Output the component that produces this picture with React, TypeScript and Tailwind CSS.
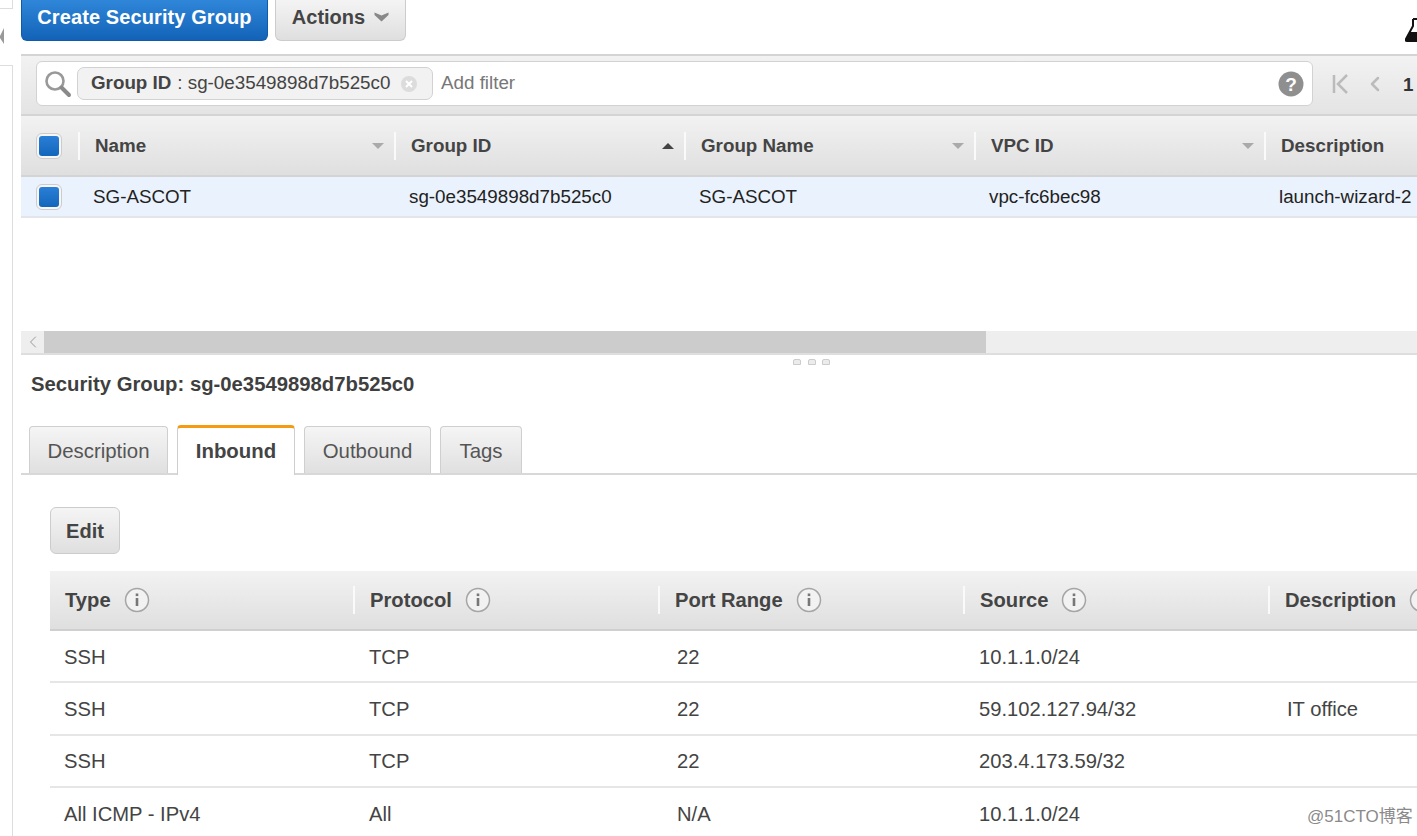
import { ChevronLeft } from "lucide-react"

const font = { fontFamily: '"Liberation Sans", Arial, sans-serif' }

const groupCols = [
  { label: "Name", value: "SG-ASCOT", width: "w-[316px]" },
  { label: "Group ID", value: "sg-0e3549898d7b525c0", width: "w-[290px]", sorted: true },
  { label: "Group Name", value: "SG-ASCOT", width: "w-[290px]" },
  { label: "VPC ID", value: "vpc-fc6bec98", width: "w-[290px]" },
  { label: "Description", value: "launch-wizard-2", width: "w-[200px]", last: true },
]

const ruleCols = ["Type", "Protocol", "Port Range", "Source", "Description"]

// cell text doesn't sit on one offset in the reference
const cellPad = ["pl-[14px]", "pl-[14px]", "pl-[17px]", "pl-[14px]", "pl-[17px]"]

const rules = [
  ["SSH", "TCP", "22", "10.1.1.0/24", ""],
  ["SSH", "TCP", "22", "59.102.127.94/32", "IT office"],
  ["SSH", "TCP", "22", "203.4.173.59/32", ""],
  ["All ICMP - IPv4", "All", "N/A", "10.1.1.0/24", ""],
]

function Check() {
  return (
    <div className="w-[26px] h-[26px] rounded-[6px] border border-[#ccc] bg-[#f6f6f6] flex items-center justify-center">
      <div className="w-[20px] h-[20px] rounded-[3px] bg-gradient-to-b from-[#2a7fd6] to-[#1166bb]" />
    </div>
  )
}

function InfoIcon() {
  return (
    <svg width="26" height="26" viewBox="0 0 26 26" className="shrink-0">
      <circle cx="13" cy="13" r="11.5" fill="#f2f2f2" stroke="#a5a5a5" strokeWidth="1.5" />
      <rect x="11.7" y="11" width="2.6" height="8" fill="#777" />
      <rect x="11.7" y="6.5" width="2.6" height="2.6" fill="#777" />
    </svg>
  )
}

function Caret({ up }: { up?: boolean }) {
  return (
    <svg width="12" height="6" viewBox="0 0 12 6">
      <path d={up ? "M0 6 L6 0 L12 6 Z" : "M0 0 L12 0 L6 6 Z"} fill={up ? "#444" : "#aaa"} />
    </svg>
  )
}

export default function App() {
  return (
    <div className="w-[1417px] h-[836px] overflow-hidden bg-white flex text-[18.8px] text-[#444]" style={font}>
      {/* left rail sliver */}
      <div className="w-[21px] shrink-0 flex flex-col">
        <div className="w-[13px] h-[9px] border-r border-b border-[#ddd]" />
        <div className="h-[56px] flex items-center">
          <svg width="4" height="22" viewBox="0 0 4 22" className="-mt-[2px]">
            <path d="M0 11 L4 3 L4 19 L0 13 Z" fill="#999" />
          </svg>
        </div>
        <div className="w-[13px] flex-1 border-r border-t border-[#ddd]" />
      </div>

      <div className="flex-1 min-w-0 overflow-hidden">
        {/* toolbar */}
        <div className="h-[54px] relative flex items-start gap-[7px]">
          <button className="w-[247px] h-[41px] rounded-b-[6px] border border-[#0f5ba8] border-t-0 bg-gradient-to-b from-[#2f86d8] to-[#1263b8] text-white font-bold text-[20px] leading-[34px] tracking-[0.1px] pb-[6px]">
            Create Security Group
          </button>
          <button className="w-[131px] h-[41px] rounded-b-[6px] border border-[#ccc] border-t-0 bg-gradient-to-b from-[#f4f4f4] to-[#dfdfdf] font-bold text-[20px] flex items-start justify-center gap-[9px] leading-[34px]">
            Actions
            <svg width="15" height="10" viewBox="0 0 15 10" className="mt-[12px]">
              <path d="M0.5 0.5 L7.5 3.5 L14.5 0.5 L14.5 3 L7.5 9.5 L0.5 3 Z" fill="#888" />
            </svg>
          </button>
          <svg width="14" height="24" viewBox="0 0 14 24" className="absolute left-[1384px] top-[18px]">
            <path d="M8 1 H14 M8 1 V8 L1 21 Q0 23 2 23 H14" fill="none" stroke="#111" strokeWidth="2" />
            <path d="M5 14 H14 V23 H2 Q0 23 1 21 Z" fill="#111" />
          </svg>
        </div>

        {/* filter bar */}
        <div className="h-[62px] border-t-2 border-b-2 border-[#d4d4d4] bg-gradient-to-b from-[#f2f2f2] to-[#e4e4e4] flex items-start pt-[5px] pl-[15px]">
          <div className="w-[1277px] h-[45px] shrink-0 rounded-[6px] border border-[#d2d2d2] bg-white flex items-center">
            <svg width="28" height="28" viewBox="0 0 28 28" className="ml-[7px] shrink-0">
              <circle cx="11" cy="11" r="8.5" fill="none" stroke="#999" strokeWidth="2.6" />
              <path d="M17.5 17.5 L25 25" stroke="#8a8a8a" strokeWidth="4" strokeLinecap="round" />
            </svg>
            <div className="ml-[5px] w-[356px] h-[33px] rounded-[7px] border border-[#d2d2d2] bg-[#f2f2f2] flex items-center pl-[13px] whitespace-nowrap">
              <span className="font-bold">Group ID</span>
              <span className="ml-[6px]">: sg-0e3549898d7b525c0</span>
              <svg width="18" height="18" viewBox="0 0 18 18" className="ml-[10px]">
                <circle cx="9" cy="9" r="8" fill="#dcdcdc" />
                <path d="M6 6 L12 12 M12 6 L6 12" stroke="#fff" strokeWidth="2" />
              </svg>
            </div>
            <span className="ml-[8px] text-[#777]">Add filter</span>
            <svg width="26" height="26" viewBox="0 0 26 26" className="ml-auto mr-[8px]">
              <circle cx="13" cy="13" r="12.5" fill="#8f8f8f" />
              <text x="13" y="19.5" textAnchor="middle" fontSize="19" fontWeight="700" fill="#fff" style={font}>?</text>
            </svg>
          </div>
          <svg width="17" height="20" viewBox="0 0 17 20" className="ml-[19px] mt-[13px] shrink-0">
            <path d="M2 1 V19 M15 1 L6 10 L15 19" fill="none" stroke="#bbb" strokeWidth="2.5" />
          </svg>
          <ChevronLeft className="ml-[14px] mt-[11px] shrink-0 text-[#bbb]" size={24} strokeWidth={2.5} />
          <span className="ml-[16px] mt-[10px] font-bold text-[#333]">1</span>
        </div>

        {/* groups table */}
        <div className="h-[61px] border-b-2 border-[#d4d4d4] bg-gradient-to-b from-[#f2f2f2] to-[#dfdfdf] flex items-center pl-[1px] pt-[1px]">
          <div className="w-[58px] shrink-0 h-[28px] flex items-center pl-[14px] border-r-2 border-[#fafafa]">
            <Check />
          </div>
          {groupCols.map((col) => (
            <div
              key={col.label}
              className={`${col.width} shrink-0 h-[28px] flex items-center pl-[15px] pr-[10px] justify-between font-bold ${col.last ? "" : "border-r-2 border-[#fafafa]"}`}
            >
              <span>{col.label}</span>
              {!col.last && <Caret up={col.sorted} />}
            </div>
          ))}
        </div>
        <div className="h-[41px] pt-[1px] border-b-2 border-[#e2e6ea] bg-[#eaf2fd] flex items-center text-[#222]">
          <div className="w-[58px] shrink-0 pl-[15px] -mt-[1px]">
            <Check />
          </div>
          {groupCols.map((col) => (
            <div key={col.label} className={`${col.width} shrink-0 pl-[14px] whitespace-nowrap`}>
              {col.value}
            </div>
          ))}
        </div>

        <div className="h-[113px]" />

        {/* horizontal scrollbar */}
        <div className="h-[24px] border-b-2 border-[#dedede] bg-[#eeeeee] flex">
          <div className="w-[23px] shrink-0 flex items-center justify-center">
            <ChevronLeft size={20} strokeWidth={1.2} className="text-[#999]" />
          </div>
          <div className="w-[942px] shrink-0 bg-[#cccccc]" />
        </div>

        {/* drag handle */}
        <div className="h-[13px] flex items-center gap-[6.5px] pl-[772px]">
          {[0, 1, 2].map((i) => (
            <div key={i} className="w-[8px] h-[6px] rounded-t-[2px] bg-[#ececec] border border-[#ccc]" />
          ))}
        </div>

        {/* detail panel */}
        <div className="pl-[10px] pt-[2px] h-[31px] flex items-center font-bold text-[20.3px] text-[#3f3f3f]">
          Security Group: sg-0e3549898d7b525c0
        </div>

        <div className="mt-[25px] h-[51px] pl-[8px] flex items-end gap-[9px] border-b-2 border-[#d8d8d8] text-[20.4px]">
          <div className="w-[139px] h-[47px] pt-[2px] rounded-t-[4px] border border-b-0 border-[#cfcfcf] bg-gradient-to-b from-[#f5f5f5] to-[#e0e0e0] flex items-center justify-center text-[#555]">
            Description
          </div>
          <div className="w-[118px] h-[50px] -mb-[2px] rounded-t-[4px] border-x border-[#cfcfcf] border-t-[3px] border-t-[#f39c12] bg-white flex items-center justify-center pb-[1px] font-bold text-[20.4px]">
            Inbound
          </div>
          <div className="w-[127px] h-[47px] pt-[2px] rounded-t-[4px] border border-b-0 border-[#cfcfcf] bg-gradient-to-b from-[#f5f5f5] to-[#e0e0e0] flex items-center justify-center text-[#555]">
            Outbound
          </div>
          <div className="w-[82px] h-[47px] pt-[2px] rounded-t-[4px] border border-b-0 border-[#cfcfcf] bg-gradient-to-b from-[#f5f5f5] to-[#e0e0e0] flex items-center justify-center text-[#555]">
            Tags
          </div>
        </div>

        <div className="pl-[29px] pt-[32px]">
          <button className="w-[70px] h-[47px] rounded-[6px] border border-[#ccc] bg-gradient-to-b from-[#f5f5f5] to-[#dfdfdf] font-bold text-[20px]">
            Edit
          </button>

          {/* rules table */}
          <div className="mt-[17px] w-[1500px] text-[20.2px]">
            <div className="h-[60px] border-b-2 border-[#cfcfcf] bg-gradient-to-b from-[#f2f2f2] to-[#dfdfdf] flex items-center">
              {ruleCols.map((label, i) => (
                <div
                  key={label}
                  className={`w-[305px] shrink-0 h-[28px] flex items-center gap-[13px] pl-[15px] font-bold ${i < ruleCols.length - 1 ? "border-r-2 border-[#fafafa]" : ""}`}
                >
                  <span>{label}</span>
                  <InfoIcon />
                </div>
              ))}
            </div>
            {rules.map((row, i) => (
              <div key={i} className="h-[52.3px] pt-[1.5px] border-b-2 border-[#e6e6e6] flex items-center">
                {row.map((cell, j) => (
                  <div key={j} className={`w-[305px] shrink-0 whitespace-nowrap ${cellPad[j]}`}>
                    {cell}
                  </div>
                ))}
              </div>
            ))}
          </div>
        </div>
      </div>

      {/* image watermark */}
      <div
        className="absolute left-[1307px] top-[804px] text-[17px] text-[#8a8a8a] whitespace-nowrap"
        style={{ fontFamily: '"Liberation Sans", "Noto Sans CJK SC", sans-serif' }}
      >
        @51CTO博客
      </div>
    </div>
  )
}
